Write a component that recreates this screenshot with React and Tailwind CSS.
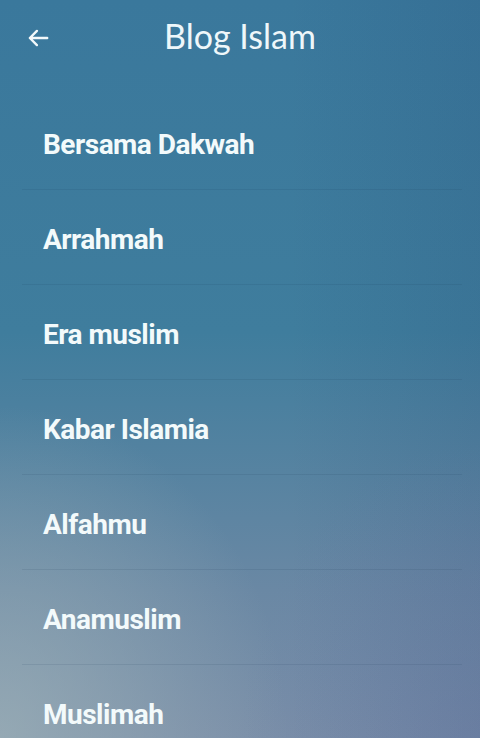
export default function App() {
  const items = [
    "Bersama Dakwah",
    "Arrahmah",
    "Era muslim",
    "Kabar Islamia",
    "Alfahmu",
    "Anamuslim",
    "Muslimah",
  ];
  return (
    <div className="relative w-[480px] h-[738px] overflow-hidden bg-[linear-gradient(180deg,#3a789c_0%,#3f7d9d_45%,#6a88a4_80%,#7a8ea8_100%)]">
      <div className="absolute inset-0 bg-[radial-gradient(ellipse_60%_45%_at_0%_100%,rgba(160,180,185,0.7),rgba(160,180,185,0)_100%)]" />
      <div className="absolute inset-0 bg-[radial-gradient(ellipse_50%_40%_at_100%_100%,rgba(108,128,170,0.45),rgba(108,128,170,0)_100%)]" />
      <div className="absolute inset-0 bg-[linear-gradient(90deg,rgba(0,0,0,0)_60%,rgba(20,40,90,0.1)_100%)]" />
      <div className="relative flex flex-col">
        <div className="h-[95px] flex items-start pt-[15px] relative">
          <div className="w-[80px] flex justify-center pt-[10px]">
            <svg width="26" height="26" viewBox="0 0 24 24" className="-ml-[4px]">
              <path d="M20.5 12H4.5M11 5.5L4.5 12l6.5 6.5" fill="none" stroke="#f2f8fa" strokeWidth="2.2" strokeLinecap="round" strokeLinejoin="round" />
            </svg>
          </div>
          <div className="flex-1 text-center pr-[80px] text-[34px] leading-[42px] text-[#eef7fa] font-['Lato','Liberation_Sans',sans-serif]">
            Blog Islam
          </div>
        </div>
        <div className="flex flex-col pl-[22px] pr-[18px]">
          {items.map((t, i) => (
            <div
              key={t}
              className={`h-[95px] flex items-center pl-[21px] ${i < items.length - 1 ? "border-b border-[rgba(20,50,80,0.1)]" : ""}`}
            >
              <span className="text-[28px] font-bold text-[#f3fafb] tracking-[-0.5px] font-['Roboto','Liberation_Sans',sans-serif] pt-[5px]">
                {t}
              </span>
            </div>
          ))}
        </div>
      </div>
    </div>
  );
}
